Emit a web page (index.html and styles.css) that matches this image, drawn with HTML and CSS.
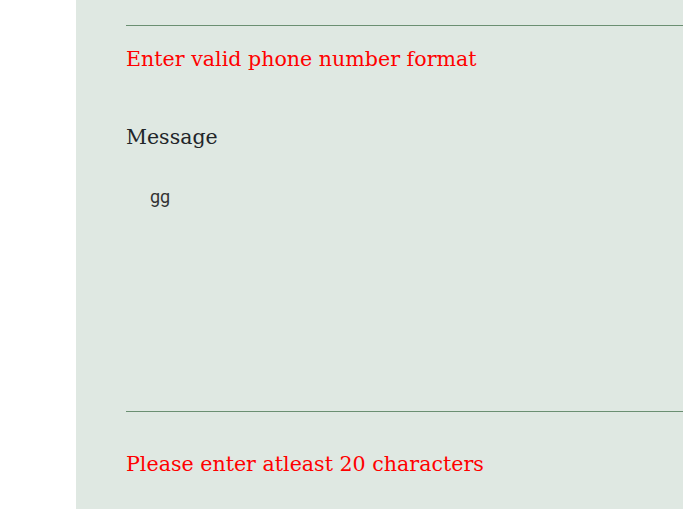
FILE: index.html
```html
<!DOCTYPE html>
<html>
<head>
<meta charset="utf-8">
<link rel="stylesheet" href="styles.css">
</head>
<body>
<div class="page">
  <aside class="side"></aside>
  <main class="panel">
    <form class="form">
      <div class="field">
        <input class="input" type="text" value="">
        <p class="error">Enter valid phone number format</p>
      </div>
      <div class="field">
        <label class="label">Message</label>
        <textarea class="textarea">gg</textarea>
        <p class="error error-msg">Please enter atleast 20 characters</p>
      </div>
    </form>
  </main>
</div>
</body>
</html>
```
FILE: styles.css
```css
html, body { margin: 0; padding: 0; }
body { width: 683px; height: 509px; overflow: hidden; background: #fff; }
.page { display: flex; height: 509px; }
.side { width: 76px; flex: none; background: #fff; }
.panel { flex: 1; background: #dfe8e2; padding-left: 50px; }
.form { display: flex; flex-direction: column; }
.field { display: flex; flex-direction: column; }
.input {
  display: block; box-sizing: border-box; width: 100%; height: 26px;
  border: 0; border-bottom: 1px solid #6b8f72; background: transparent; margin: 0; padding: 0;
}
.error {
  margin: 0; color: #ff0000;
  font-family: "DejaVu Serif", "Liberation Serif", serif;
  font-size: 20.6px; line-height: 24px;
}
.field:first-child .error { margin-top: 21px; }
.label {
  display: block; margin-top: 54px;
  font-family: "DejaVu Serif", "Liberation Serif", serif;
  font-size: 20.5px; line-height: 24px; color: #212529;
}
.textarea {
  display: block; box-sizing: border-box; width: 100%; height: 239px; margin-top: 24px;
  border: 0; border-bottom: 1px solid #6b8f72; background: transparent; resize: none; outline: none;
  padding: 12px 24px; font-family: Roboto, "Noto Sans", sans-serif; font-size: 18px; line-height: 24px; color: #333;
}
.error-msg { margin-top: 40px; }
```
